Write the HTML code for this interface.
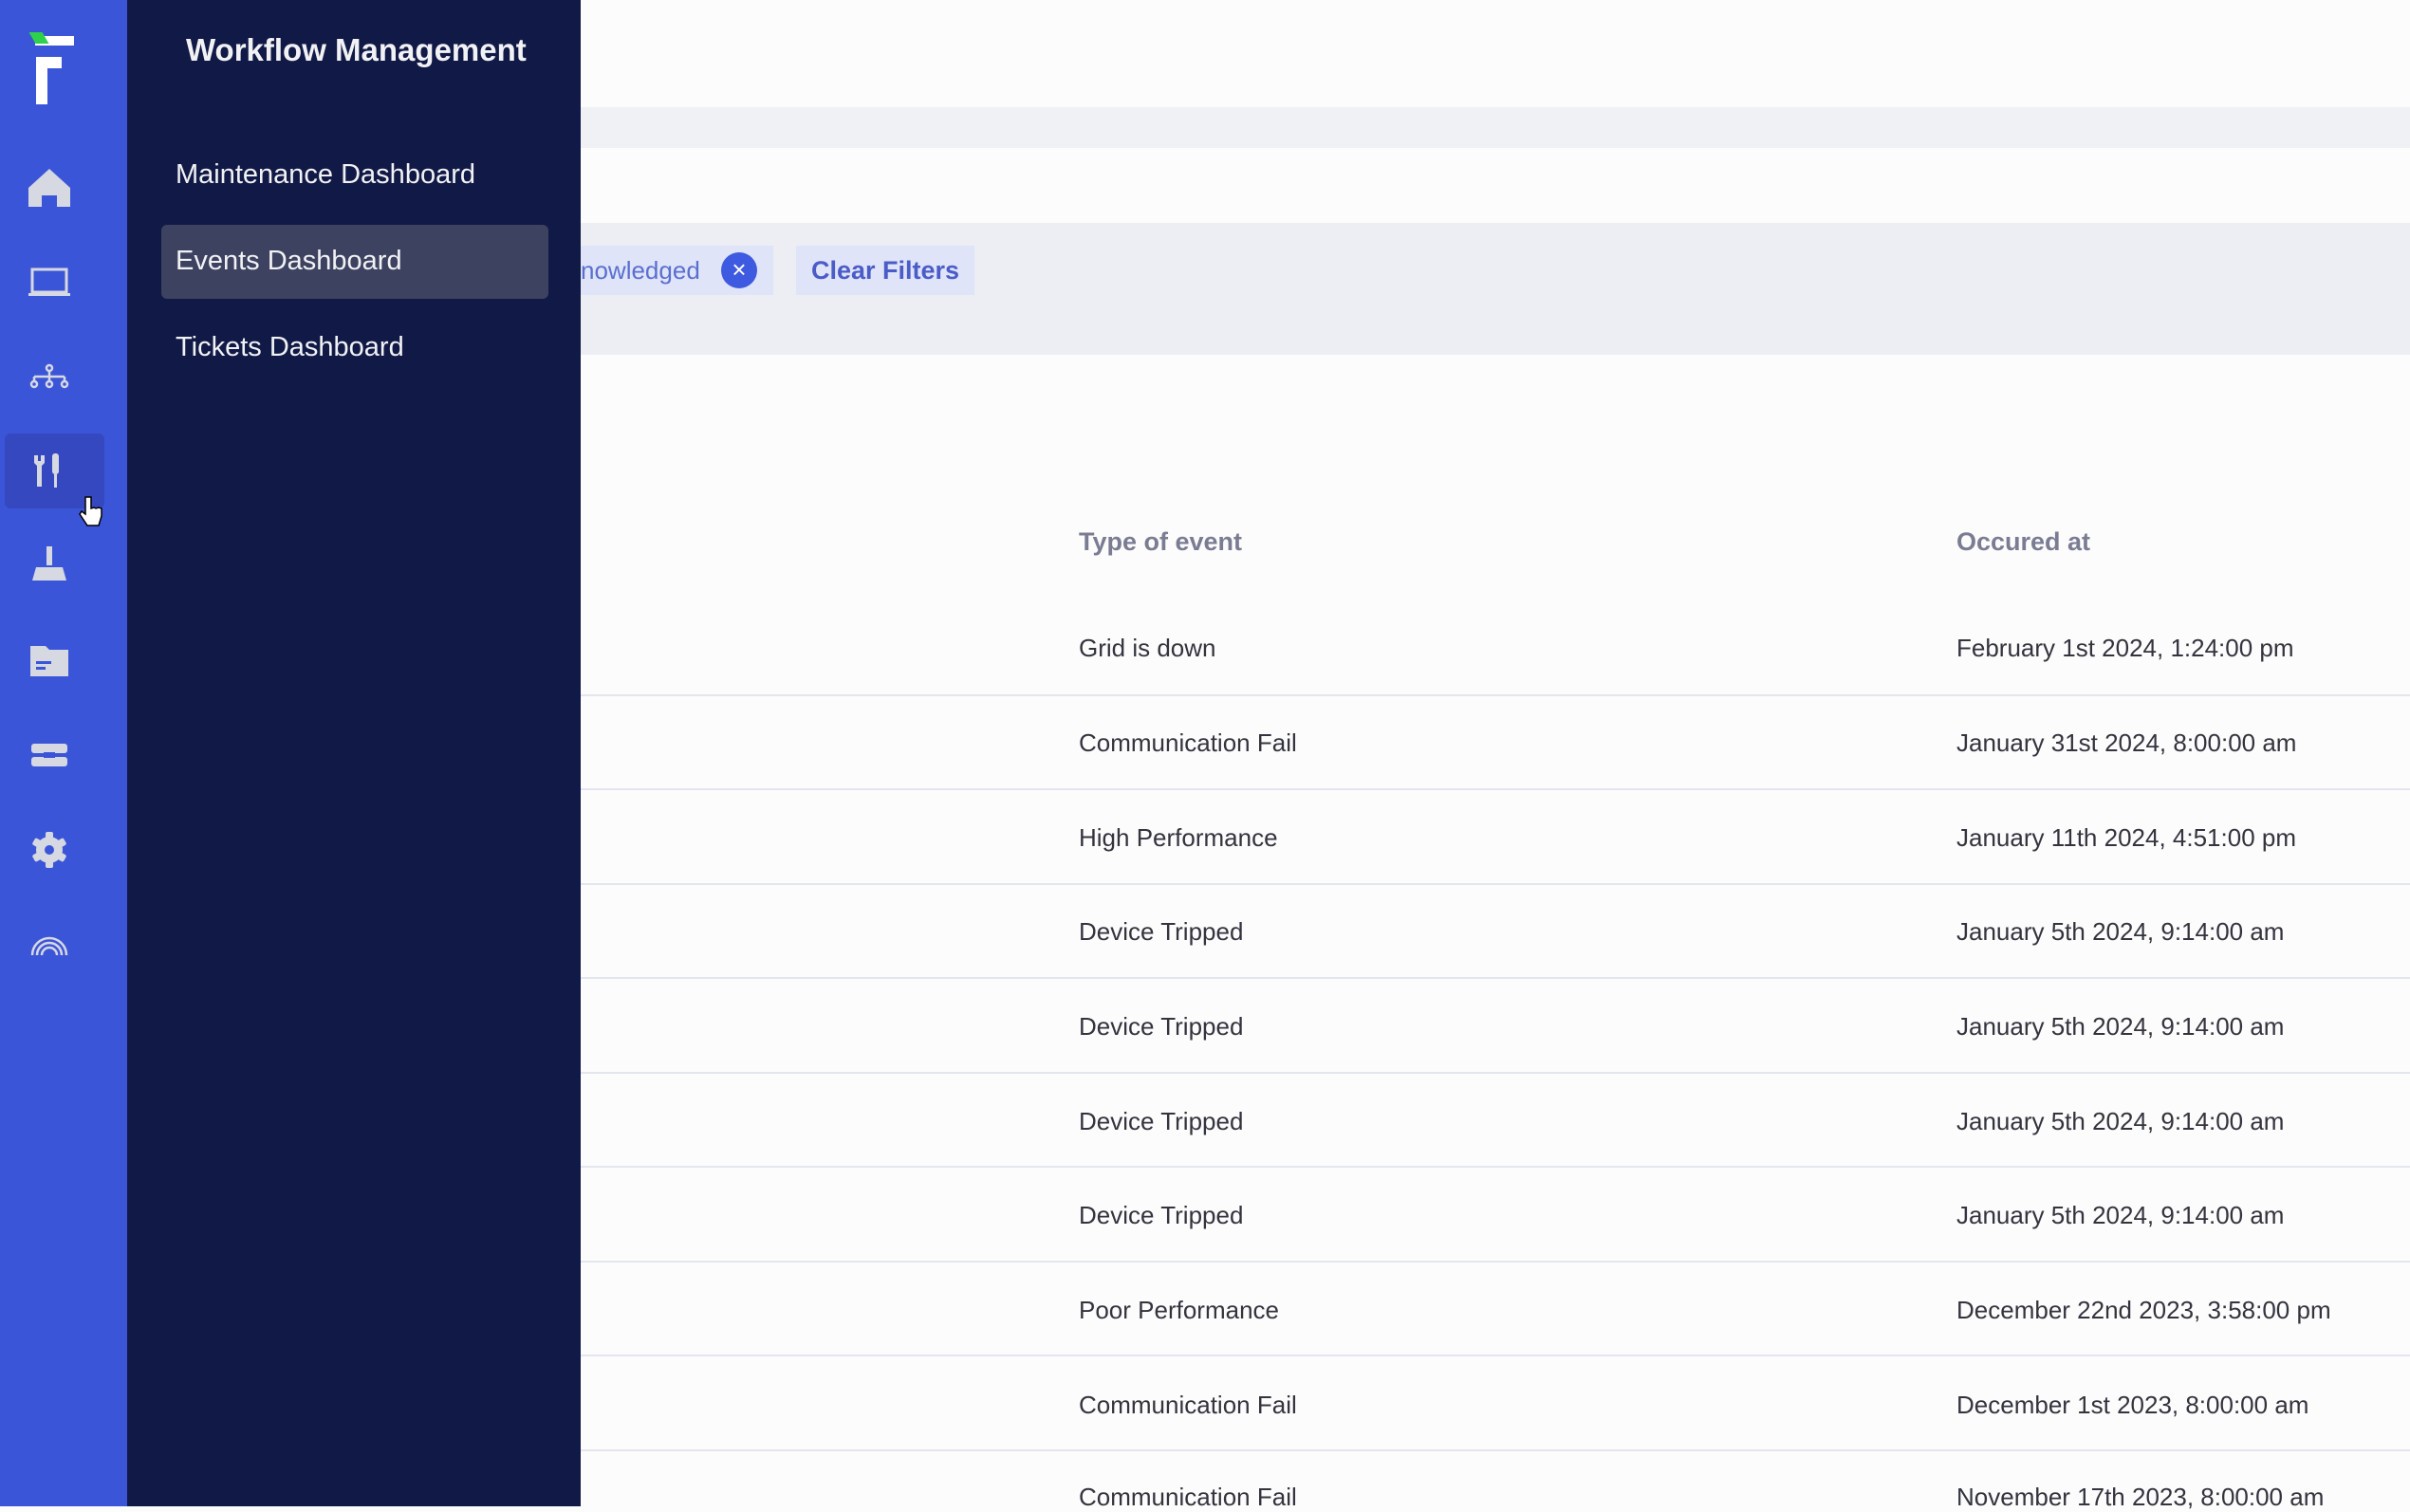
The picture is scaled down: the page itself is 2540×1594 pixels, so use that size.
<!DOCTYPE html>
<html><head><meta charset="utf-8"><style>
*{margin:0;padding:0;box-sizing:border-box}
body{width:2540px;height:1588px;overflow:hidden;background:#fcfcfd;font-family:"Liberation Sans",sans-serif;position:relative}
.rail{position:absolute;left:0;top:0;width:134px;height:1588px;background:#3b55d8}
.panel{position:absolute;left:134px;top:0;width:478px;height:1588px;background:#111a46}
.abs{position:absolute}
.ic{position:absolute;left:22px;width:60px;height:60px}
.panel .t{position:absolute;color:#f2f2f5;font-size:29px;left:51px}
.row{position:absolute;left:612px;width:1928px;height:100px;border-bottom:2px solid #e4e5ee}
.c1,.c2{position:absolute;font-size:26px;color:#33343d}
.c1{left:1137px}.c2{left:2062px}
</style></head><body>
<div class="abs" style="left:612px;top:113px;right:0;height:43px;background:#f0f1f4"></div>
<div class="abs" style="left:612px;top:235px;right:0;height:139px;background:#eceef3"></div>
<div class="abs" style="left:612px;top:259px;width:203px;height:52px;background:#dfe4f8"></div>
<div class="abs" style="left:612px;top:270px;font-size:26px;color:#5a6fd0">nowledged</div>
<div class="abs" style="left:760px;top:266px;width:38px;height:38px;border-radius:50%;background:#3d5ae0;color:#fff;font-size:26px;text-align:center;line-height:37px">×</div>
<div class="abs" style="left:839px;top:259px;width:188px;height:52px;background:#dfe4f8;color:#4b5cc8;font-size:27px;font-weight:bold;text-align:center;line-height:52px">Clear Filters</div>
<div class="abs" style="left:1137px;top:556px;font-size:27px;color:#7a7c92;font-weight:bold">Type of event</div>
<div class="abs" style="left:2062px;top:556px;font-size:27px;color:#7a7c92;font-weight:bold">Occured at</div>

<div class="row" style="top:634px"></div><div class="row" style="top:733px"></div><div class="row" style="top:833px"></div><div class="row" style="top:932px"></div><div class="row" style="top:1032px"></div><div class="row" style="top:1131px"></div><div class="row" style="top:1231px"></div><div class="row" style="top:1330px"></div><div class="row" style="top:1430px"></div>

<div class="c1" style="top:668px">Grid is down</div><div class="c2" style="top:668px">February 1st 2024, 1:24:00 pm</div>
<div class="c1" style="top:768px">Communication Fail</div><div class="c2" style="top:768px">January 31st 2024, 8:00:00 am</div>
<div class="c1" style="top:868px">High Performance</div><div class="c2" style="top:868px">January 11th 2024, 4:51:00 pm</div>
<div class="c1" style="top:967px">Device Tripped</div><div class="c2" style="top:967px">January 5th 2024, 9:14:00 am</div>
<div class="c1" style="top:1067px">Device Tripped</div><div class="c2" style="top:1067px">January 5th 2024, 9:14:00 am</div>
<div class="c1" style="top:1167px">Device Tripped</div><div class="c2" style="top:1167px">January 5th 2024, 9:14:00 am</div>
<div class="c1" style="top:1266px">Device Tripped</div><div class="c2" style="top:1266px">January 5th 2024, 9:14:00 am</div>
<div class="c1" style="top:1366px">Poor Performance</div><div class="c2" style="top:1366px">December 22nd 2023, 3:58:00 pm</div>
<div class="c1" style="top:1466px">Communication Fail</div><div class="c2" style="top:1466px">December 1st 2023, 8:00:00 am</div>
<div class="c1" style="top:1563px">Communication Fail</div><div class="c2" style="top:1563px">November 17th 2023, 8:00:00 am</div>

<div class="rail">
  <div class="abs" style="left:37px;top:38px;width:41px;height:10px;background:#fff"></div>
  <div class="abs" style="left:34px;top:34px;width:14px;height:12px;background:#2ed24a;transform:skewX(30deg)"></div>
  <div class="abs" style="left:38px;top:60px;width:27px;height:12px;background:#fff"></div>
  <div class="abs" style="left:38px;top:60px;width:12px;height:50px;background:#fff"></div>
  <div class="abs" style="left:5px;top:457px;width:105px;height:79px;background:#3548c0;border-radius:6px"></div>
  <svg class="ic" style="top:168px" viewBox="0 0 60 60"><path d="M8 30 L30 10 L52 30 V50 H38 V38 H22 V50 H8Z" fill="#d6d8e2"/></svg>
  <svg class="ic" style="top:267px" viewBox="0 0 60 60"><rect x="12" y="17" width="36" height="24" fill="none" stroke="#d6d8e2" stroke-width="3"/><rect x="8" y="42" width="44" height="3" fill="#d6d8e2"/></svg>
  <svg class="ic" style="top:367px" viewBox="0 0 60 60" fill="none" stroke="#d6d8e2" stroke-width="2.5"><circle cx="30" cy="21" r="3"/><path d="M30 24V30M14 30H46M14 30V35M30 30V35M46 30V35"/><circle cx="14" cy="38" r="3"/><circle cx="30" cy="38" r="3"/><circle cx="46" cy="38" r="3"/></svg>
  <svg class="ic" style="top:466px" viewBox="0 0 60 60" fill="#d6d8e2"><path d="M14 14h4v6h3v-6h4v8l-3 3v22h-5V25l-3-3z"/><rect x="33" y="12" width="7" height="22" rx="3"/><rect x="35" y="34" width="3" height="14"/></svg>
  <svg class="ic" style="top:568px" viewBox="0 0 60 60" fill="#d6d8e2"><rect x="27" y="8" width="6" height="20"/><path d="M16 30H44L48 44H12Z"/></svg>
  <svg class="ic" style="top:667px" viewBox="0 0 60 60" fill="#d6d8e2"><path d="M10 14H26L30 18H50V46H10Z"/><rect x="16" y="30" width="16" height="3" fill="#3b55d8"/><rect x="16" y="36" width="10" height="3" fill="#3b55d8"/></svg>
  <svg class="ic" style="top:767px" viewBox="0 0 60 60" fill="#d6d8e2"><rect x="11" y="17" width="38" height="10" rx="3"/><rect x="11" y="31" width="38" height="10" rx="3"/><rect x="24" y="26" width="12" height="6" fill="#3b55d8"/></svg>
  <svg class="ic" style="top:866px" viewBox="0 0 60 60"><g fill="#d6d8e2"><circle cx="30" cy="30" r="14"/><rect x="26" y="11" width="8" height="38" rx="2"/><rect x="26" y="11" width="8" height="38" rx="2" transform="rotate(60 30 30)"/><rect x="26" y="11" width="8" height="38" rx="2" transform="rotate(120 30 30)"/></g><circle cx="30" cy="30" r="5" fill="#3b55d8"/></svg>
  <svg class="ic" style="top:965px" viewBox="0 0 60 60" fill="none" stroke="#d6d8e2" stroke-width="2.5"><path d="M12 42A18 18 0 0 1 48 42M17 42A13 13 0 0 1 43 42M22 42A8 8 0 0 1 38 42"/></svg>
</div>
<div class="panel">
  <div class="t" style="left:62px;top:34px;font-size:33px;font-weight:bold">Workflow Management</div>
  <div class="t" style="top:168px">Maintenance Dashboard</div>
  <div class="abs" style="left:36px;top:237px;width:408px;height:78px;background:#3d4260;border-radius:6px"></div>
  <div class="t" style="top:259px">Events Dashboard</div>
  <div class="t" style="top:350px">Tickets Dashboard</div>
</div>
<svg class="abs" style="left:82px;top:522px" width="28" height="36" viewBox="0 0 28 36"><path d="M8 2v18l-4-3-2 3 8 12h12l3-10V14l-3-1-3 1-2-1-3 1V2z" fill="#fff" stroke="#000" stroke-width="1.5"/></svg>
</body></html>
